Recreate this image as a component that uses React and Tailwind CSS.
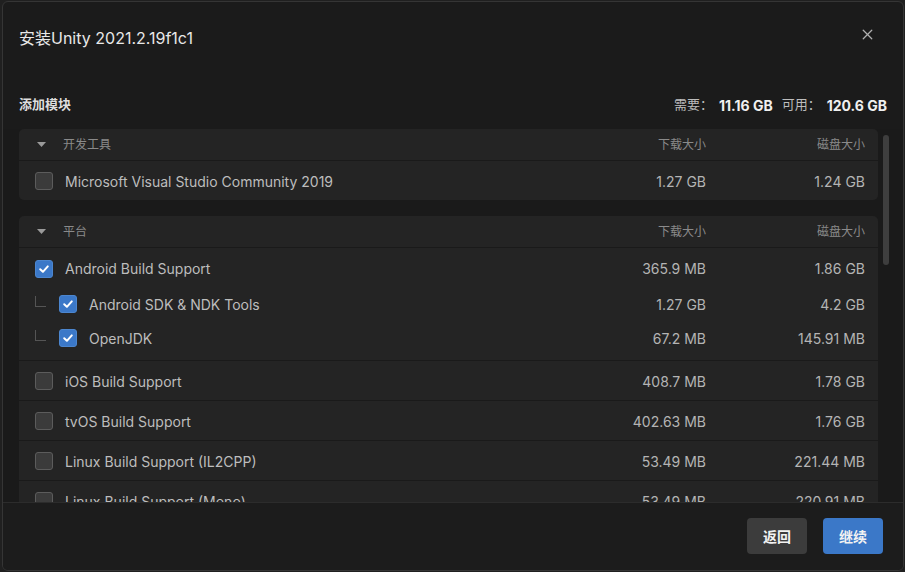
import { X } from "lucide-react";

const font = { fontFamily: "Inter, 'Noto Sans CJK SC', sans-serif" };

function Checkbox({ checked }) {
  if (checked) {
    return (
      <div className="w-[18px] h-[18px] rounded-[3px] bg-[#3b78c8] border border-[#4c86cf] flex items-center justify-center shrink-0">
        <svg width="12" height="12" viewBox="0 0 12 12" fill="none">
          <path d="M2.2 6.2 L4.9 8.8 L9.8 3.4" stroke="#ffffff" strokeWidth="2" strokeLinecap="round" strokeLinejoin="round" />
        </svg>
      </div>
    );
  }
  return <div className="w-[18px] h-[18px] rounded-[3px] bg-[#3b3b3b] border border-[#5c5c5c] shrink-0" />;
}

function Sizes({ dl, disk }) {
  return (
    <>
      <div className="w-[110px] text-right text-[#b4b4b4]">{dl}</div>
      <div className="w-[159px] text-right text-[#b4b4b4]">{disk}</div>
    </>
  );
}

function Header({ title }) {
  return (
    <div className="h-[32px] flex items-center pr-[13px] border-b border-[#1a1a1a] text-[12px] text-[#8a8a8a]">
      <div className="w-[44px] flex justify-center pl-[1px]">
        <svg width="9" height="5" viewBox="0 0 9 5">
          <path d="M0 0 L9 0 L4.5 5 Z" fill="#9a9a9a" />
        </svg>
      </div>
      <div className="flex-1 pt-[1px]">{title}</div>
      <div className="w-[110px] text-right">下载大小</div>
      <div className="w-[159px] text-right">磁盘大小</div>
    </div>
  );
}

function Row({ name, dl, disk, checked, h = "h-[40px]", border = true }) {
  return (
    <div className={`${h} flex items-center pl-[16px] pr-[13px] pt-[1px] ${border ? "border-b border-[#1a1a1a]" : ""}`}>
      <Checkbox checked={checked} />
      <div className="flex-1 pl-[12px] text-[#bdbdbd]">{name}</div>
      <Sizes dl={dl} disk={disk} />
    </div>
  );
}

function SubRow({ name, dl, disk, h }) {
  return (
    <div className={`${h} flex items-center pl-[16px] pr-[13px]`}>
      <div className="w-[11px] h-[11px] border-l border-b border-[#555555] mb-[6px] shrink-0" />
      <div className="ml-[13px]">
        <Checkbox checked />
      </div>
      <div className="flex-1 pl-[12px] text-[#bdbdbd]">{name}</div>
      <Sizes dl={dl} disk={disk} />
    </div>
  );
}

const platforms = [
  { name: "iOS Build Support", dl: "408.7 MB", disk: "1.78 GB" },
  { name: "tvOS Build Support", dl: "402.63 MB", disk: "1.76 GB" },
  { name: "Linux Build Support (IL2CPP)", dl: "53.49 MB", disk: "221.44 MB" },
  { name: "Linux Build Support (Mono)", dl: "53.49 MB", disk: "220.91 MB" },
  { name: "Mac Build Support (Mono)", dl: "83.2 MB", disk: "470.4 MB" },
];

export default function App() {
  return (
    <div className="w-[905px] h-[572px] bg-[#202020] pl-[2px] pt-[1px] pr-[1px] pb-[1px]" style={font}>
      <div className="w-full h-full bg-[#1b1b1b] border border-[#353535] rounded-[6px] flex flex-col overflow-hidden">
        {/* Title */}
        <div className="flex items-center pl-[16px] pr-[27px] pt-[25px]">
          <div className="flex-1 text-[16px] leading-[22px] text-[#e8e8e8]">安装Unity 2021.2.19f1c1</div>
          <X className="w-[17px] h-[17px] text-[#b0b0b0] -mt-[7px]" strokeWidth={1.8} />
        </div>

        {/* Sub header */}
        <div className="flex items-center pl-[16px] pr-[16px] mt-[46px] mb-[14px] h-[20px] text-[13px]">
          <div className="flex-1 font-bold text-[#dedede]">添加模块</div>
          <span className="text-[#bdbdbd]">需要：</span>
          <span className="ml-[6px] text-[14px] font-bold text-[#f0f0f0]">11.16 GB</span>
          <span className="ml-[9px] text-[#bdbdbd]">可用：</span>
          <span className="ml-[6px] text-[14px] font-bold text-[#f0f0f0]">120.6 GB</span>
        </div>

        {/* List */}
        <div className="relative flex-1 overflow-hidden bg-[#1a1a1a]">
          <div className="pl-[16px] pr-[25px] flex flex-col gap-[16px] text-[14px]">
            <div className="bg-[#242424] rounded-[5px] overflow-hidden">
              <Header title="开发工具" />
              <Row name="Microsoft Visual Studio Community 2019" dl="1.27 GB" disk="1.24 GB" h="h-[39px]" border={false} />
            </div>

            <div className="bg-[#242424] rounded-[5px] overflow-hidden">
              <Header title="平台" />
              <div className="border-b border-[#1a1a1a] pb-[4px]">
                <Row name="Android Build Support" dl="365.9 MB" disk="1.86 GB" checked border={false} />
                <SubRow name="Android SDK & NDK Tools" dl="1.27 GB" disk="4.2 GB" h="h-[32px]" />
                <SubRow name="OpenJDK" dl="67.2 MB" disk="145.91 MB" h="h-[36px]" />
              </div>
              {platforms.map((p) => (
                <Row key={p.name} name={p.name} dl={p.dl} disk={p.disk} />
              ))}
            </div>
          </div>
          {/* Scrollbar */}
          <div className="absolute left-[880px] top-[6px] w-[6px] h-[130px] rounded-full bg-[#3e3e3e]" />
        </div>

        {/* Footer */}
        <div className="h-[68px] shrink-0 border-t border-[#2c2c2c] bg-[#1c1c1c] flex items-center justify-end gap-[16px] pr-[20px] pb-[1px]">
          <button className="w-[60px] h-[36px] rounded-[4px] bg-[#3c3c3c] text-[14px] font-bold text-[#f2f2f2]">返回</button>
          <button className="w-[60px] h-[36px] rounded-[4px] bg-[#3b78c8] text-[14px] font-bold text-[#f2f2f2]">继续</button>
        </div>
      </div>
    </div>
  );
}
